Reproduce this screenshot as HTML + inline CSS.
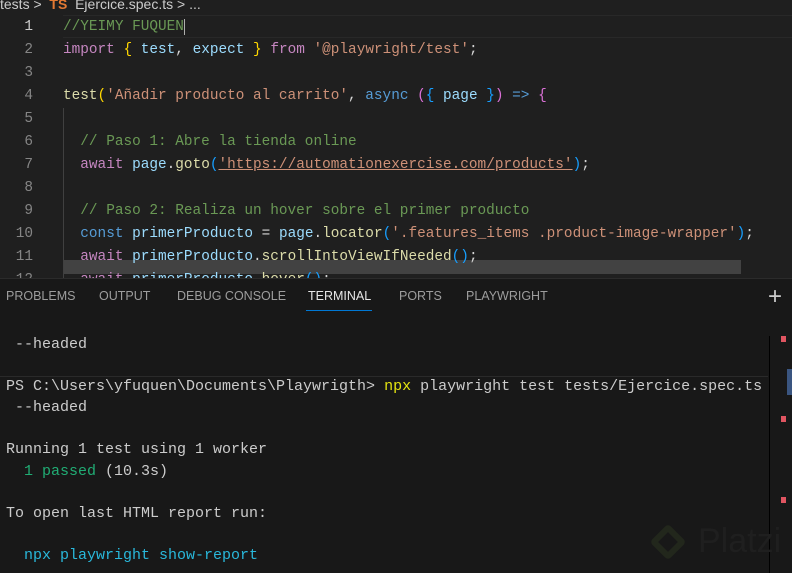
<!DOCTYPE html>
<html><head><meta charset="utf-8"><style>
*{margin:0;padding:0;box-sizing:border-box}
body{width:792px;height:572px;overflow:hidden;background:#181818;position:relative;font-family:"Liberation Mono",monospace}
#ed{position:absolute;left:0;top:0;width:792px;height:278px;background:#1f1f1f;overflow:hidden}
.bc{position:absolute;top:-4px;left:0;font:14px "Liberation Sans",sans-serif;color:#ccc;white-space:pre}
.ln{position:absolute;left:0;width:33px;text-align:right;color:#858585;font-size:14.4px;line-height:23px}
.code{position:absolute;left:63px;font-size:14.4px;line-height:23px;color:#d4d4d4}
.row{height:23px;white-space:pre}
.c{color:#6a9955}.k{color:#c586c0}.v{color:#9cdcfe}.s{color:#ce9178}.f{color:#dcdcaa}.b{color:#569cd6}.y{color:#ffd700}.p{color:#da70d6}.bl{color:#179fff}
#panel{position:absolute;left:0;top:278px;width:792px;height:294px;background:#181818;border-top:1px solid #2b2b2b}
.tabs{position:absolute;top:10px;left:0;font:12.5px "Liberation Sans",sans-serif;color:#9d9d9d}
.tabs span{position:absolute;white-space:nowrap}
.term{position:absolute;left:6px;top:55px;font-size:15px;line-height:21.1px;color:#cccccc;white-space:pre}
.g{color:#23d18b;opacity:.8}.cy{color:#29b8db}.yl{color:#e5e510}
</style></head><body>
<div id="ed">
<div class="bc">tests &gt;  <span style="color:#e37933;font-weight:bold">TS</span>  Ejercice.spec.ts &gt; ...</div>
<div style="position:absolute;left:63px;top:15px;width:729px;height:23px;border-top:1px solid #282828;border-bottom:1px solid #282828"></div>
<div style="position:absolute;left:63px;top:260px;width:678px;height:14px;background:#424242"></div>
<div style="position:absolute;left:63px;top:108px;width:1px;height:170px;background:#404040"></div>
<div class="ln" style="top:16px"><div class="row" style="color:#ccc">1</div><div class="row">2</div><div class="row">3</div><div class="row">4</div><div class="row">5</div><div class="row">6</div><div class="row">7</div><div class="row">8</div><div class="row">9</div><div class="row">10</div><div class="row">11</div><div class="row">12</div></div>
<div class="code" style="top:16px"><div class="row"><span class="c">//YEIMY FUQUEN</span><span style="border-left:1px solid #aeafad"></span></div><div class="row"><span class="k">import</span> <span class="y">{</span> <span class="v">test</span>, <span class="v">expect</span> <span class="y">}</span> <span class="k">from</span> <span class="s">'@playwright/test'</span>;</div><div class="row"></div><div class="row"><span class="f">test</span><span class="y">(</span><span class="s">'Añadir producto al carrito'</span>, <span class="b">async</span> <span class="p">(</span><span class="bl">{</span> <span class="v">page</span> <span class="bl">}</span><span class="p">)</span> <span class="b">=&gt;</span> <span class="p">{</span></div><div class="row"></div><div class="row">  <span class="c">// Paso 1: Abre la tienda online</span></div><div class="row">  <span class="k">await</span> <span class="v">page</span>.<span class="f">goto</span><span class="bl">(</span><span class="s" style="text-decoration:underline">'https://automationexercise.com/products'</span><span class="bl">)</span>;</div><div class="row"></div><div class="row">  <span class="c">// Paso 2: Realiza un hover sobre el primer producto</span></div><div class="row">  <span class="b">const</span> <span class="v">primerProducto</span> = <span class="v">page</span>.<span class="f">locator</span><span class="bl">(</span><span class="s">'.features_items .product-image-wrapper'</span><span class="bl">)</span>;</div><div class="row">  <span class="k">await</span> <span class="v">primerProducto</span>.<span class="f">scrollIntoViewIfNeeded</span><span class="bl">()</span>;</div><div class="row">  <span class="k">await</span> <span class="v">primerProducto</span>.<span class="f">hover</span><span class="bl">()</span>;</div></div>
</div>
<div id="panel">
<div class="tabs">
<span style="left:6px">PROBLEMS</span><span style="left:99px">OUTPUT</span><span style="left:177px">DEBUG CONSOLE</span><span style="left:308px;color:#e7e7e7">TERMINAL</span><span style="left:399px">PORTS</span><span style="left:466px">PLAYWRIGHT</span>
</div>
<div style="position:absolute;left:306px;top:31px;width:66px;height:1px;background:#0078d4"></div>
<div style="position:absolute;left:768px;top:4px;font:24px 'Liberation Sans',sans-serif;color:#ccc;font-weight:300">+</div>
<div style="position:absolute;left:0;top:97px;width:768px;height:1px;background:#2a2a2a"></div>
<div style="position:absolute;left:769px;top:57px;width:1px;height:237px;background:#000"></div>
<div style="position:absolute;left:781px;top:57px;width:5px;height:6px;background:#e05561"></div>
<div style="position:absolute;left:781px;top:137px;width:5px;height:6px;background:#e05561"></div>
<div style="position:absolute;left:781px;top:218px;width:5px;height:6px;background:#e05561"></div>
<div style="position:absolute;left:787px;top:90px;width:5px;height:26px;background:#3a5580"></div>
<div class="term"> --headed

PS C:\Users\yfuquen\Documents\Playwrigth&gt; <span class="yl">npx</span> playwright test tests/Ejercice.spec.ts
 --headed

Running 1 test using 1 worker
  <span class="g">1 passed</span> (10.3s)

To open last HTML report run:

  <span class="cy">npx playwright show-report</span></div>
<div style="position:absolute;left:655px;top:250px;width:26px;height:26px;border:6px solid #22271c;transform:rotate(45deg);border-radius:4px"></div>
<div style="position:absolute;left:698px;top:243px;font:34px 'Liberation Sans',sans-serif;color:#1f1f1f">Platzi</div>
</div>
</body></html>
